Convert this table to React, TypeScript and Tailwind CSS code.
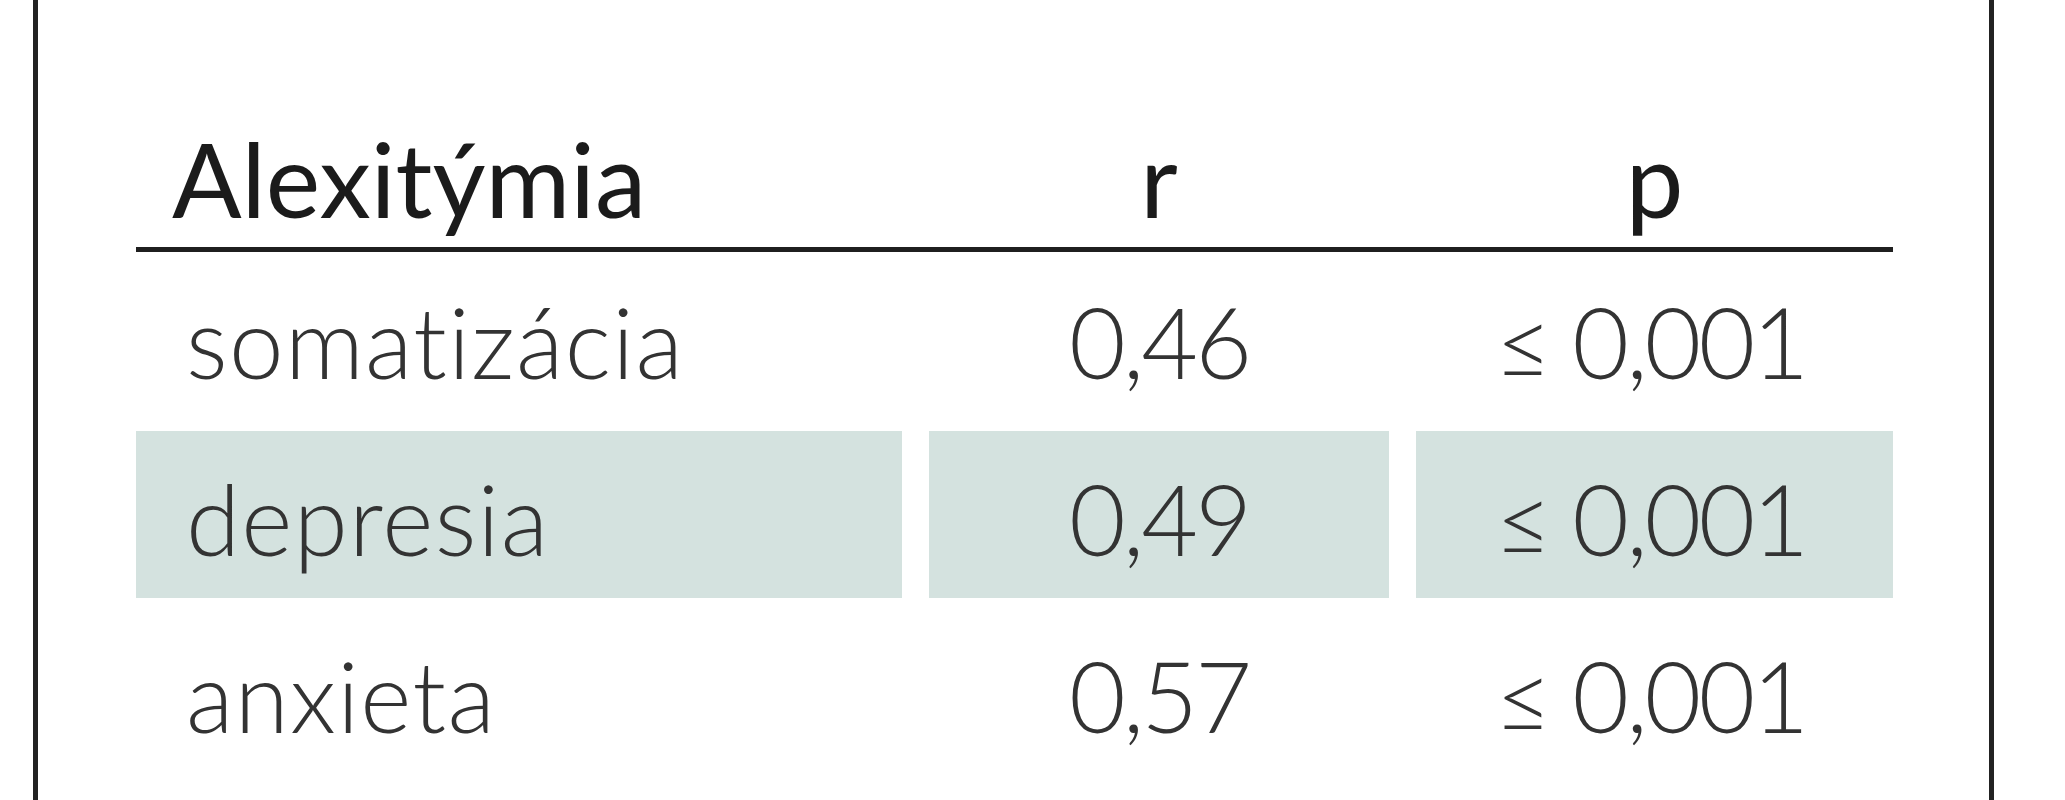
const rows = [
  { label: 'somatizácia', r: '0,46', p: '≤ 0,001', shaded: false },
  { label: 'depresia', r: '0,49', p: '≤ 0,001', shaded: true },
  { label: 'anxieta', r: '0,57', p: '≤ 0,001', shaded: false },
];

export default function App() {
  return (
    <div className="h-[800px] w-[2065px] bg-white font-['Lato','Open_Sans',sans-serif] [font-variant-ligatures:none]">
      <div className="ml-[33px] h-[800px] w-[1961px] border-x-[5px] border-[#222] pl-[98px]">
        {/* header */}
        <div className="grid w-[1757px] grid-cols-[766px_460px_477px] gap-x-[27px] border-b-[5px] border-[#1f1f1f] pt-[127px] pb-[17px] text-[103px] leading-none text-[#1b1b1b]">
          <div className="pl-[36px]">Alexitýmia</div>
          <div className="text-center">r</div>
          <div className="text-center">p</div>
        </div>

        {/* body */}
        <div className="mt-[2px] flex w-[1757px] flex-col gap-[10px]">
          {rows.map((row) => (
            <div
              key={row.label}
              className="grid h-[167px] grid-cols-[766px_460px_477px] gap-x-[27px] text-[98px] font-light leading-none text-[#333]"
            >
              <div className={`pt-[38px] pl-[50px] tracking-[1.3px] ${row.shaded ? 'bg-[#d4e2df]' : ''}`}>{row.label}</div>
              <div className={`pt-[38px] text-center tracking-[-3px] ${row.shaded ? 'bg-[#d4e2df]' : ''}`}>{row.r}</div>
              <div className={`pt-[38px] pr-[8px] text-center tracking-[-3px] ${row.shaded ? 'bg-[#d4e2df]' : ''}`}>{row.p}</div>
            </div>
          ))}
        </div>
      </div>
    </div>
  );
}
